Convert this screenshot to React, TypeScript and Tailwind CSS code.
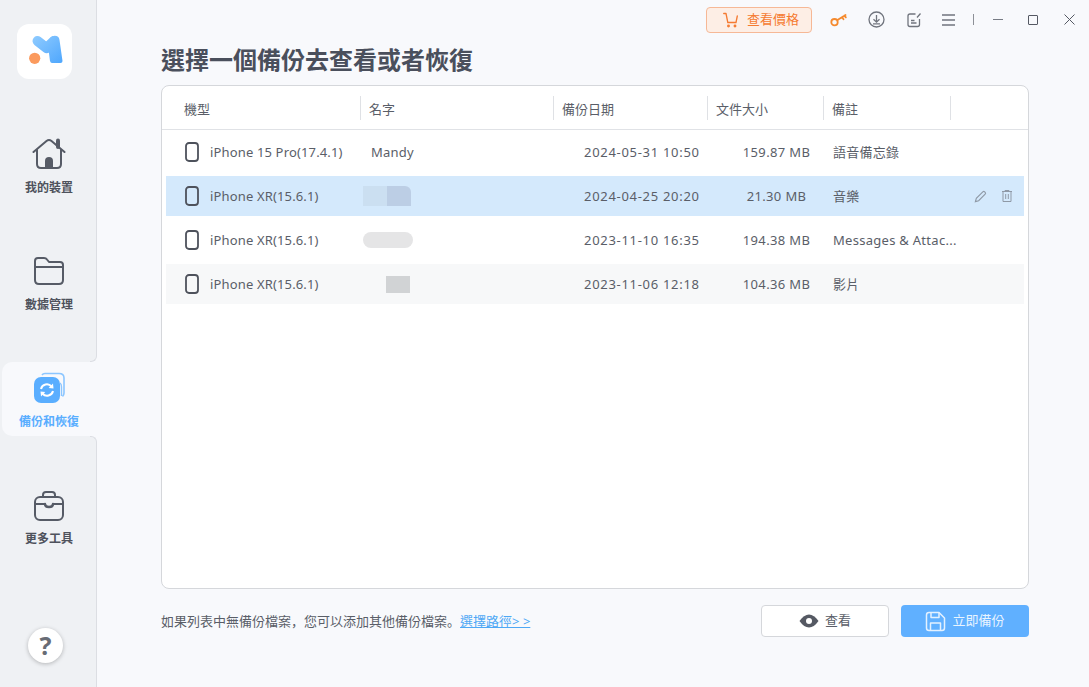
const FONT = "font-['Noto_Sans','Noto_Sans_CJK_TC',sans-serif]";

function Logo() {
  return (
    <svg width="55" height="55" viewBox="0 0 55 55">
      <defs>
        <linearGradient id="mg" gradientUnits="userSpaceOnUse" x1="18" y1="10" x2="44" y2="40">
          <stop offset="0" stopColor="#8fcbff" />
          <stop offset="1" stopColor="#4fa7fd" />
        </linearGradient>
      </defs>
      <path d="M20.5 17 L29.5 24 L37 17" fill="none" stroke="url(#mg)" strokeWidth="10" strokeLinecap="round" strokeLinejoin="round" />
      <path d="M33 14 Q36 11 39.5 12 Q42 12.5 42.5 16 L45.5 37 Q45.5 39 43.5 39 L35 39 Q33.5 39 33 37 L31 22 Z" fill="url(#mg)" />
      <circle cx="17.7" cy="34.3" r="5.6" fill="#fb9a5d" />
    </svg>
  );
}

function HomeIcon() {
  return (
    <svg width="34" height="32" viewBox="0 0 34 32" fill="none" stroke="#565b66" strokeWidth="2" strokeLinecap="round" strokeLinejoin="round">
      <path d="M1.5 14 L14.5 3 Q17 1 19.5 3 L32.5 14" />
      <path d="M5 12 V26 Q5 30 9 30 H25 Q29 30 29 26 V12" />
      <path d="M26 2.5 V9" strokeWidth="4" />
      <path d="M13 30 V23 Q13 19 17 19 Q21 19 21 23 V30 Z" fill="#565b66" stroke="none" />
    </svg>
  );
}

function FolderIcon() {
  return (
    <svg width="32" height="30" viewBox="0 0 32 30" fill="none" stroke="#565b66" strokeWidth="2" strokeLinejoin="round">
      <path d="M2 8 V5 Q2 2 5 2 H11 Q13 2 14 3.5 L16 6 H27 Q30 6 30 9 V24 Q30 28 26 28 H6 Q2 28 2 24 Z" />
      <path d="M2 11 H30" />
    </svg>
  );
}

function BackupIcon() {
  return (
    <svg width="32" height="32" viewBox="0 0 32 32" fill="none">
      <path d="M9 3 Q10 1.5 12 1.5 H26 Q31 1.5 31 6 V21 Q31 23 29.5 24.5" stroke="#8cc6ff" strokeWidth="1.6" />
      <rect x="1" y="5" width="26" height="26" rx="7" fill="#5aaeff" />
      <path d="M27 11 Q28.5 12 28.5 15 V24" stroke="#8cc6ff" strokeWidth="1.4" />
      <path d="M8 17 A6 6 0 0 1 18.5 14.5" stroke="#fff" strokeWidth="2" />
      <path d="M20 11.5 L20.5 16.5 L15.7 15.9 Z" fill="#fff" />
      <path d="M20 19 A6 6 0 0 1 9.5 21.5" stroke="#fff" strokeWidth="2" />
      <path d="M8 24.5 L7.5 19.5 L12.3 20.1 Z" fill="#fff" />
    </svg>
  );
}

function CaseIcon() {
  return (
    <svg width="32" height="32" viewBox="0 -1 32 32" fill="none" stroke="#565b66" strokeWidth="2" strokeLinecap="round">
      <rect x="2" y="7" width="28" height="23" rx="5" />
      <path d="M10 7 V5 Q10 2 13 2 H19 Q22 2 22 5 V7" />
      <path d="M2 14 H11 M21 14 H30" />
      <path d="M12 14 Q12 17 16 17 Q20 17 20 14" strokeWidth="2.4" />
    </svg>
  );
}

function NavItem({ icon, label, active }: { icon: React.ReactNode; label: string; active?: boolean }) {
  return (
    <div
      className={`relative flex h-[74px] flex-col items-center pt-[10px] ${
        active ? "z-10 ml-[2px] mr-[-1px] rounded-l-[10px] bg-[#f8f9fc]" : "pl-[2px]"
      }`}
    >
      {active && (
        <>
          <div className="absolute right-0 top-[-7px] h-[7px] w-[7px] bg-[#f8f9fc]">
            <div className="h-full w-full rounded-br-[6px] border-b border-r border-[#dcdee3] bg-[#eff1f4]" />
          </div>
          <div className="absolute bottom-[-7px] right-0 h-[7px] w-[7px] bg-[#f8f9fc]">
            <div className="h-full w-full rounded-tr-[6px] border-r border-t border-[#dcdee3] bg-[#eff1f4]" />
          </div>
        </>
      )}
      <div className={`flex h-8 items-center justify-center ${active ? "pr-[1px]" : ""}`}>{icon}</div>
      <div className={`mt-[10px] text-xs font-bold leading-4 ${active ? "mr-[1px] text-[#5aaeff]" : "text-[#4e525c]"}`}>
        {label}
      </div>
    </div>
  );
}

function Sidebar() {
  return (
    <aside className="relative flex h-full w-[97px] shrink-0 flex-col border-r border-[#dcdee3] bg-[#eff1f4]">
      <div className="ml-[17px] mt-6 flex h-[55px] w-[55px] items-center justify-center rounded-xl bg-white">
        <Logo />
      </div>
      <div className="mt-[49px] flex flex-col gap-[43px]">
        <NavItem icon={<HomeIcon />} label="我的裝置" />
        <NavItem icon={<FolderIcon />} label="數據管理" />
        <NavItem icon={<BackupIcon />} label="備份和恢復" active />
        <NavItem icon={<CaseIcon />} label="更多工具" />
      </div>
      <div className="ml-[28px] mt-[75px] flex h-[35px] w-[35px] items-center justify-center rounded-full bg-white text-[25px] font-bold text-[#686c75] shadow-[0_1px_4px_rgba(0,0,0,0.25)]">
        ?
      </div>
    </aside>
  );
}

function TopBar() {
  const s = { fill: "none", stroke: "#70747d", strokeWidth: 1.3 };
  return (
    <div className="flex h-[38px] items-center pl-[609px] pt-[1px]">
      <div className="flex h-[26px] w-[106px] items-center rounded border border-[#f6b896] bg-[#fdeee5] pl-4 text-[13px] text-[#f57a30]">
        <svg width="15" height="16" viewBox="0 0 15 16" fill="none" stroke="#f57a30" strokeWidth="1.3" strokeLinecap="round" strokeLinejoin="round">
          <path d="M0.7 1.5 H3 L4.8 10.5 H13 L14.3 4" />
          <circle cx="5.5" cy="14" r="0.8" />
          <circle cx="12" cy="14" r="0.8" />
        </svg>
        <span className="ml-[9px]">查看價格</span>
      </div>
      <svg className="ml-[18px]" width="17" height="15" viewBox="0 0 17 15" fill="none" stroke="#f58a2e" strokeWidth="1.8" strokeLinecap="round">
        <circle cx="4.5" cy="10.2" r="3.2" />
        <path d="M7.5 8 L15.5 3 M12 5.2 L13.5 7.2 M14.5 3.6 L15.8 5.4" />
      </svg>
      <svg className="ml-[21px]" width="17" height="17" viewBox="0 0 17 17" {...s}>
        <circle cx="8.5" cy="8.5" r="7.5" />
        <path d="M8.5 4 V11 M5.5 8.3 L8.5 11.2 L11.5 8.3 M5 12.8 H12" />
      </svg>
      <svg className="ml-[21px]" width="16" height="16" viewBox="0 0 16 16" {...s}>
        <path d="M9.5 2 H4 Q2 2 2 4 V12.5 Q2 14.5 4 14.5 H11.5 Q13.5 14.5 13.5 12.5 V7" />
        <path d="M11 5.5 L14.5 1.5 M5 8.5 H8.5 M5 11 H10.5" />
      </svg>
      <svg className="ml-[20px]" width="13" height="12" viewBox="0 0 13 12" fill="none" stroke="#70747d" strokeWidth="1.5">
        <path d="M0 1 H13 M0 6 H13 M0 11 H13" />
      </svg>
      <div className="ml-[18px] h-[11px] w-px bg-[#8d9097]" />
      <div className="ml-[19px] h-px w-[10px] bg-[#777b84]" />
      <div className="ml-[25px] h-[10px] w-[10px] rounded-[1px] border border-[#555963]" />
      <svg className="ml-[26px]" width="11" height="11" viewBox="0 0 11 11" fill="none" stroke="#555963" strokeWidth="1">
        <path d="M0.5 0.5 L10.5 10.5 M10.5 0.5 L0.5 10.5" />
      </svg>
    </div>
  );
}

function PhoneIcon() {
  return (
    <svg width="14" height="20" viewBox="0 0 14 20" fill="none" stroke="#4e525c" strokeWidth="1.8">
      <rect x="1" y="1" width="12" height="18" rx="3" />
    </svg>
  );
}

const HEADERS = [
  { t: "機型", cls: "w-[199px] pl-[22px]" },
  { t: "名字", cls: "w-[193px] pl-2" },
  { t: "備份日期", cls: "w-[154px] pl-2" },
  { t: "文件大小", cls: "w-[116px] pl-2" },
  { t: "備註", cls: "w-[127px] pl-2" },
];

function Patch({ kind }: { kind: number }) {
  if (kind === 1)
    return (
      <div className="ml-[-8px] flex h-5 blur-[0.6px]">
        <div className="h-5 w-6 bg-[#cbdff1]" />
        <div className="h-5 w-6 rounded-tr-md bg-[#bccee5]" />
      </div>
    );
  if (kind === 2) return <div className="ml-[-8px] h-4 w-[50px] rounded-lg bg-[#e5e5e6] blur-[0.6px]" />;
  return <div className="ml-[15px] h-[17px] w-6 bg-[#d1d3d5] blur-[0.5px]" />;
}

type Row = { model: string; name?: string; patch?: number; date: string; size: string; note: string; bg: string; actions?: boolean };

const ROWS: Row[] = [
  { model: "iPhone 15 Pro(17.4.1)", name: "Mandy", date: "2024-05-31 10:50", size: "159.87 MB", note: "語音備忘錄", bg: "" },
  { model: "iPhone XR(15.6.1)", patch: 1, date: "2024-04-25 20:20", size: "21.30 MB", note: "音樂", bg: "bg-[#d4e9fc]", actions: true },
  { model: "iPhone XR(15.6.1)", patch: 2, date: "2023-11-10 16:35", size: "194.38 MB", note: "Messages & Attac...", bg: "" },
  { model: "iPhone XR(15.6.1)", patch: 3, date: "2023-11-06 12:18", size: "104.36 MB", note: "影片", bg: "bg-[#f7f8f9]" },
];

function BackupRow({ r }: { r: Row }) {
  return (
    <div className={`flex h-10 items-center text-[13px] text-[#5a5e68] ${r.bg}`}>
      <div className="flex w-[195px] items-center pl-[19px]">
        <PhoneIcon />
        <span className="ml-[11px] whitespace-nowrap pt-[2px] tracking-[0.15px]">{r.model}</span>
      </div>
      <div className="flex w-[192px] items-center pl-[10px]">
        {r.name ? <span className="pt-[2px] tracking-[0.2px]">{r.name}</span> : <Patch kind={r.patch ?? 1} />}
      </div>
      <div className="w-[154px] whitespace-nowrap pl-[31px] pt-[2px] tracking-[0.7px]">{r.date}</div>
      <div className="w-[116px] whitespace-nowrap pl-[23px] pt-[2px] text-center tracking-[0.35px]">{r.size}</div>
      <div className="w-[130px] whitespace-nowrap pl-[10px] pt-[2px] tracking-[0.28px]">{r.note}</div>
      {r.actions && (
        <div className="ml-[21px] flex items-center gap-[15px]">
          <svg width="13" height="13" viewBox="0 0 14 14" fill="none" stroke="#8f99a6" strokeWidth="1.2">
            <path d="M1.5 12.5 L2.5 9 L9.5 2 Q10.5 1 11.5 2 L12 2.5 Q13 3.5 12 4.5 L5 11.5 Z" />
          </svg>
          <svg width="10" height="12" viewBox="0 0 10 12" fill="none" stroke="#8f99a6" strokeWidth="1">
            <path d="M0 1.5 H10 M3 1.5 V0.5 H7 V1.5 M1 1.5 V11.5 H9 V1.5 M3.7 4 V9 M6.3 4 V9" />
          </svg>
        </div>
      )}
    </div>
  );
}

function Table() {
  return (
    <div className="h-[504px] w-[868px] rounded-lg border border-[#d5d7db] bg-white">
      <div className="flex h-[44px] items-center border-b border-[#e0e2e6]">
        {HEADERS.map((h) => (
          <div key={h.t} className={`flex h-6 shrink-0 items-center border-r border-[#dfe1e5] pt-1 text-[13px] text-[#5a5e68] ${h.cls}`}>
            {h.t}
          </div>
        ))}
      </div>
      <div className="mx-1 mt-[2px] flex flex-col gap-1">
        {ROWS.map((r, i) => (
          <BackupRow key={i} r={r} />
        ))}
      </div>
    </div>
  );
}

function Footer() {
  const punct = "font-['Noto_Sans_CJK_SC',sans-serif]";
  return (
    <div className="mt-4 flex h-8 w-[868px] items-center">
      <div className="text-[13px] text-[#5a5e68]">
        如果列表中無備份檔案<span className={punct}>，</span>您可以添加其他備份檔案<span className={punct}>。</span>
        <span className="text-[#4ea8f5] underline">選擇路徑&gt; &gt;</span>
      </div>
      <div className="ml-auto flex gap-3">
        <div className="flex h-8 w-[128px] items-center justify-center rounded border border-[#d5d7db] bg-white text-[13px] text-[#5a5e68]">
          <svg width="20" height="14" viewBox="0 0 20 14">
            <path d="M0.5 7 Q5 0.5 10 0.5 Q15 0.5 19.5 7 Q15 13.5 10 13.5 Q5 13.5 0.5 7 Z" fill="#555963" />
            <circle cx="10" cy="7" r="3" fill="#fff" />
          </svg>
          <span className="ml-[6px]">查看</span>
        </div>
        <div className="flex h-8 w-[128px] items-center justify-center rounded bg-[#60b0ff] text-[13px] text-[#e8f4ff]">
          <svg width="21" height="21" viewBox="0 0 21 21" fill="none" stroke="#e3f1ff" strokeWidth="1.5" strokeLinejoin="round">
            <path d="M1.5 4 Q1.5 1.5 4 1.5 H14 L19.5 7 V17 Q19.5 19.5 17 19.5 H4 Q1.5 19.5 1.5 17 Z" />
            <path d="M6 1.5 V6.5 H14 V1.5 M5.5 19.5 V12 H15.5 V19.5" />
          </svg>
          <span className="ml-[6px]">立即備份</span>
        </div>
      </div>
    </div>
  );
}

export default function App() {
  return (
    <div className={`flex h-[687px] w-[1089px] overflow-hidden bg-[#f8f9fc] ${FONT}`}>
      <Sidebar />
      <main className="flex min-w-0 flex-1 flex-col">
        <TopBar />
        <div className="pl-16">
          <h1 className="h-[47px] pt-[5px] text-2xl font-bold leading-[34px] text-[#4a4f5c]">選擇一個備份去查看或者恢復</h1>
          <Table />
          <Footer />
        </div>
      </main>
    </div>
  );
}
